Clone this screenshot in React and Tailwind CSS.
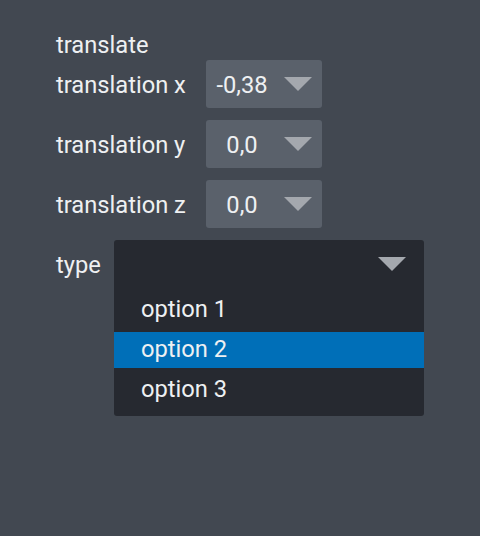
export default function App() {
    const font = { fontFamily: 'Roboto, "Noto Sans", sans-serif' };
    const rows = [
        { label: 'translation x', value: '-0,38' },
        { label: 'translation y', value: '0,0' },
        { label: 'translation z', value: '0,0' },
    ];
    const options = ['option 1', 'option 2', 'option 3'];
    const selected = 1;

    return (
        <div style={font} className="w-[480px] h-[536px] bg-[#424851] text-[#eef0f2] text-[23.7px] leading-[28px] pl-14 pt-[31px]">
            <div className="h-[28px]">translate</div>

            <div className="mt-[1px] flex flex-col gap-3">
                {rows.map(r => (
                    <div key={r.label} className="flex items-center h-12">
                        <div className="w-[150px] pt-[1px]">{r.label}</div>
                        <div className="w-[116px] h-12 rounded-[3px] bg-[#5a616b] flex items-center">
                            <span className="w-[72px] text-center pt-[1px]">{r.value}</span>
                            <Arrow className="ml-[6px]" color="#a4a8ae" />
                        </div>
                    </div>
                ))}

                {/* Type dropdown */}
                <div className="flex items-start">
                    <div className="w-[58px] h-12 flex items-center pt-[1px]">type</div>
                    <div className="w-[310px] bg-[#262930] rounded-[3px] pb-2">
                        <div className="h-12 flex items-center justify-end pr-[18px]">
                            <Arrow color="#a4a8ae" />
                        </div>
                        <div className="flex flex-col gap-1 pt-1">
                            {options.map((o, i) => (
                                <div
                                    key={o}
                                    className={`h-9 flex items-center pl-[27px] pb-[2px] ${i === selected ? 'bg-[#006fb8]' : ''}`}
                                >
                                    {o}
                                </div>
                            ))}
                        </div>
                    </div>
                </div>
            </div>
        </div>
    );
}

function Arrow({ className = '', color }) {
    return (
        <svg width="28" height="14" viewBox="0 0 28 14" className={className}>
            <polygon points="0,0 28,0 14,14" fill={color} />
        </svg>
    );
}
